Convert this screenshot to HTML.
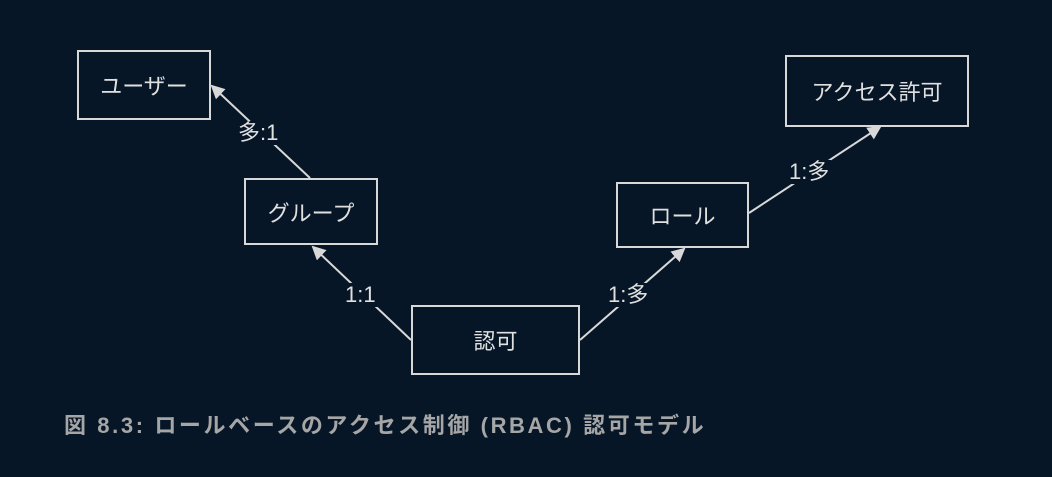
<!DOCTYPE html>
<html><head><meta charset="utf-8"><style>
html,body{margin:0;padding:0;}
body{width:1052px;height:477px;background:#061626;overflow:hidden;position:relative;font-family:"Liberation Sans","Noto Sans CJK JP",sans-serif;}
.b{position:absolute;border:2px solid #d8d8d8;box-sizing:border-box;color:#e0e0e0;font-size:22px;display:flex;align-items:center;justify-content:center;}
.l{position:absolute;color:#e0e0e0;font-size:22px;background:#061626;padding:0 2px;line-height:24px;}
.cap{position:absolute;left:64px;top:408px;color:#a6a6a6;font-size:22px;font-weight:bold;letter-spacing:2.6px;white-space:nowrap;}
</style></head><body>
<svg width="1052" height="477" style="position:absolute;left:0;top:0">
<defs><marker id="a" markerWidth="14" markerHeight="14" refX="12" refY="7" orient="auto" markerUnits="userSpaceOnUse"><path d="M0,0 L14,7 L0,14 z" fill="#d8d8d8"/></marker></defs>
<g stroke="#d8d8d8" stroke-width="2">
<line x1="310" y1="178" x2="212" y2="86" marker-end="url(#a)"/>
<line x1="411" y1="340" x2="313" y2="247" marker-end="url(#a)"/>
<line x1="580" y1="340" x2="684" y2="249" marker-end="url(#a)"/>
<line x1="749" y1="213" x2="880" y2="127" marker-end="url(#a)"/>
</g></svg>
<div class="b" style="left:77px;top:50px;width:134px;height:70px">ユーザー</div>
<div class="b" style="left:244px;top:178px;width:134px;height:67px">グループ</div>
<div class="b" style="left:411px;top:305px;width:169px;height:70px">認可</div>
<div class="b" style="left:616px;top:182px;width:133px;height:66px">ロール</div>
<div class="b" style="left:785px;top:55px;width:184px;height:72px">アクセス許可</div>
<div class="l" style="left:236px;top:121px">多:1</div>
<div class="l" style="left:343px;top:283px">1:1</div>
<div class="l" style="left:606px;top:283px">1:多</div>
<div class="l" style="left:787px;top:160px">1:多</div>
<div class="cap">図 8.3: ロールベースのアクセス制御 (RBAC) 認可モデル</div>
</body></html>
